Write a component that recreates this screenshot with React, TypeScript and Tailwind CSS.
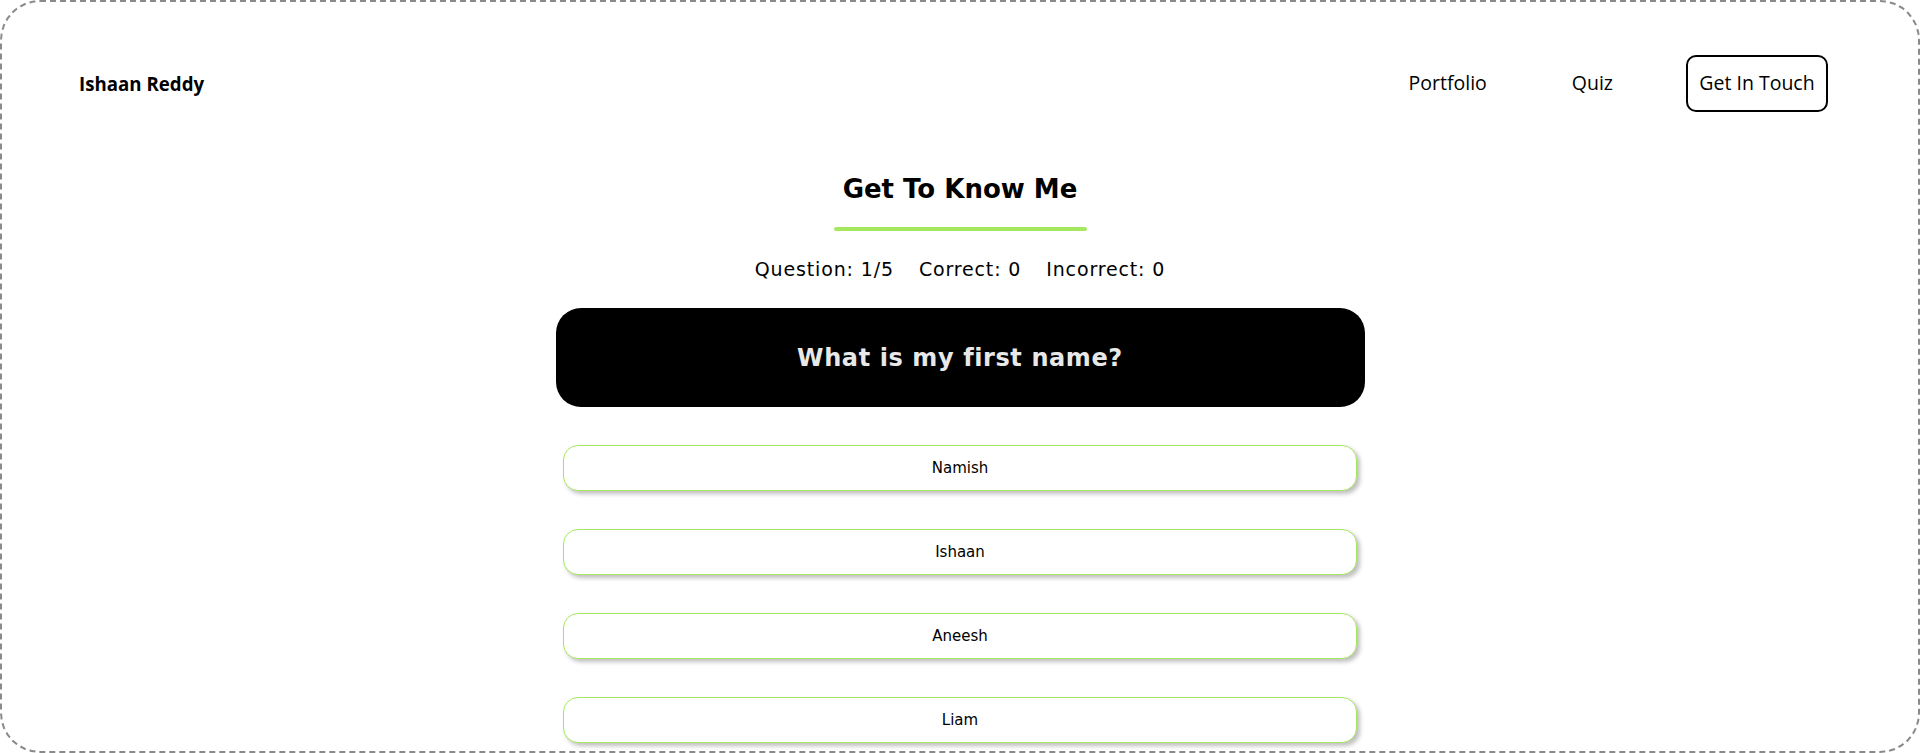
import React from "react";

const options = ["Namish", "Ishaan", "Aneesh", "Liam"];

export default function App() {
  return (
    <div className="h-[753px] w-full bg-white overflow-hidden">
      <div className="h-[753px] w-full rounded-[40px] border-2 border-dashed border-[#8a8a8a] flex flex-col">
        <nav className="flex items-center justify-between pl-[77px] pr-[90px] pt-[52px] h-[110px] [font-family:'Open_Sans','Noto_Sans',sans-serif]">
          <div className="text-[18.7px] font-bold text-black mt-[2px]">Ishaan Reddy</div>
          <div className="flex items-center">
            <a className="text-[19.5px] text-black mr-[85px] -mt-[1px]">Portfolio</a>
            <a className="text-[19.5px] text-black mr-[73px] -mt-[1px]">Quiz</a>
            <button className="h-[57px] w-[142px] rounded-[10px] border-2 border-black text-[19.5px] text-black">
              Get In Touch
            </button>
          </div>
        </nav>
        <div className="flex flex-col items-center">
          <h1 className="mt-[60px] text-[26px] leading-[34px] font-bold text-black [font-family:'DejaVu_Sans',Verdana,sans-serif]">
            Get To Know Me
          </h1>
          <div className="mt-[21px] h-[4px] w-[253px] rounded-full bg-[#a5e85f]" />
          <div className="mt-[26px] flex gap-[25px] text-[19px] tracking-[0.85px] leading-[24px] text-black [font-family:'DejaVu_Sans',Verdana,sans-serif]">
            <span>Question: 1/5</span>
            <span>Correct: 0</span>
            <span>Incorrect: 0</span>
          </div>
          <div className="mt-[27px] flex h-[99px] w-[809px] items-center justify-center rounded-[25px] bg-black">
            <span className="text-[24px] tracking-[0.6px] font-bold text-[#e8e8e8] [font-family:'DejaVu_Sans',Verdana,sans-serif]">
              What is my first name?
            </span>
          </div>
          <div className="mt-[38px] flex flex-col gap-[38px]">
            {options.map((o) => (
              <button
                key={o}
                className="flex h-[46px] w-[794px] items-center justify-center rounded-[15px] border border-[#a5e85f] bg-white text-[15px] text-black shadow-[3px_3px_4px_rgba(0,0,0,0.25)] [font-family:'DejaVu_Sans',Verdana,sans-serif]"
              >
                {o}
              </button>
            ))}
          </div>
        </div>
      </div>
    </div>
  );
}
